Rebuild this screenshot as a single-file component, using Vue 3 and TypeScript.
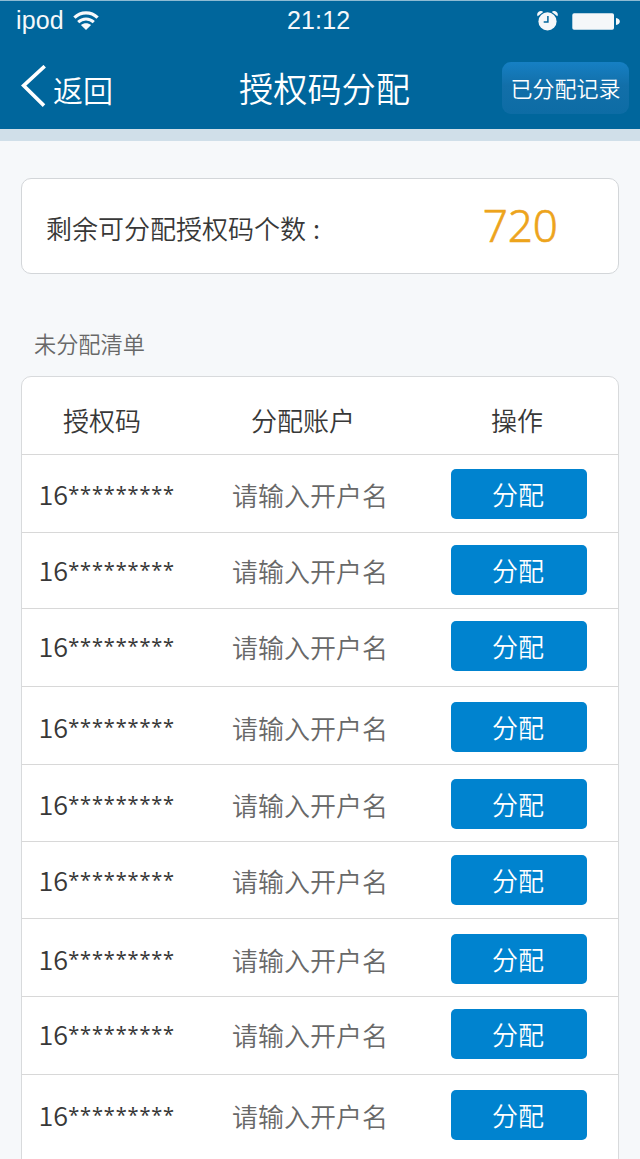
<script setup lang="ts">
interface Row {
  prefix: string
  mask: string
  height: number
  top: number
}

const prefix = '16'
const mask = '*********'
const rows: Row[] = [
  { prefix, mask, height: 78, top: 14 },
  { prefix, mask, height: 76, top: 12 },
  { prefix, mask, height: 78, top: 12 },
  { prefix, mask, height: 78, top: 15 },
  { prefix, mask, height: 77, top: 14 },
  { prefix, mask, height: 77, top: 13 },
  { prefix, mask, height: 78, top: 15 },
  { prefix, mask, height: 78, top: 12 },
  { prefix, mask, height: 108, top: 15 },
]
</script>

<template>
  <div class="screen">
    <header class="header">
      <div class="status">
        <span class="carrier">ipod</span>
        <svg class="wifi" width="26" height="19" viewBox="0 0 26 19" fill="none" stroke="#f7f9fb">
          <path d="M1.4 6.6C8 .2 18 .2 24.6 6.6" stroke-width="3.3" />
          <path d="M5.2 11.1C9.7 6.8 16.3 6.8 20.8 11.1" stroke-width="3" />
          <path d="M7.9 14.1C11 11.5 15 11.5 18.1 14.1L13 19Z" fill="#f7f9fb" stroke="none" />
        </svg>
        <span class="time">21:12</span>
        <svg class="alarm" width="21" height="20" viewBox="0 0 21 20">
          <path d="M.7 5.3A3.5 3.5 0 0 1 6.2 1.1ZM20.3 5.3A3.5 3.5 0 0 0 14.8 1.1Z" fill="#f5f7f9" />
          <circle cx="10.5" cy="10.4" r="9.1" fill="#f5f7f9" />
          <path d="M10.9 5v5.9H6.7" fill="none" stroke="#00669c" stroke-width="1.5" />
        </svg>
        <svg class="battery" width="49" height="17" viewBox="0 0 49 17" fill="#f5f7f9">
          <rect x=".3" y=".3" width="41.7" height="16.4" rx="1.8" />
          <path d="M44 5Q47.8 5.7 47.8 8.5T44 12Z" />
        </svg>
      </div>
      <nav class="nav">
        <a class="back">
          <svg width="25" height="42" viewBox="0 0 25 42" fill="none" stroke="#fff" stroke-width="3.6">
            <path d="M23.7 1.2L2.6 20.6L23 40.6" />
          </svg>
          <span>返回</span>
        </a>
        <h1 class="title">授权码分配</h1>
        <button class="history">已分配记录</button>
      </nav>
    </header>

    <section class="summary">
      <span class="label">剩余可分配授权码个数<span class="colon">:</span></span>
      <span class="count">720</span>
    </section>

    <h2 class="caption">未分配清单</h2>

    <section class="list">
      <div class="list-head">
        <span>授权码</span>
        <span>分配账户</span>
        <span>操作</span>
      </div>
      <div v-for="(row, i) in rows" :key="i" class="row" :style="{ height: row.height + 'px', paddingTop: row.top + 'px' }">
        <span class="code">{{ row.prefix }}<span class="mask">{{ row.mask }}</span></span>
        <span class="account">请输入开户名</span>
        <button class="assign">分配</button>
      </div>
    </section>
  </div>
</template>

<style>
body {
  background: #f6f8fa;
}
</style>

<style scoped>
.screen {
  box-sizing: border-box;
  width: 640px;
  height: 1159px;
  overflow: hidden;
  background: #f6f8fa;
  font-family: "Noto Sans CJK SC", sans-serif;
  font-weight: 350;
  color: #383838;
}
button {
  padding: 0;
  border: 0;
  font-family: inherit;
  font-weight: inherit;
  color: #fff;
}
.header {
  box-sizing: border-box;
  height: 141px;
  border-top: 1px solid #8dbbd3;
  border-bottom: 12px solid #d0dfe9;
  background: #00669c;
  color: #fff;
}
.status {
  display: flex;
  height: 40px;
  padding-left: 16px;
  font: 25px/39px "Liberation Sans", Arial, sans-serif;
  letter-spacing: 0.15px;
  color: #f5f8fa;
}
.carrier {
  width: 57px;
}
.wifi {
  margin-top: 10px;
}
.time {
  width: 250px;
  margin-left: 188px;
}
.alarm {
  flex: none;
  margin: 10px 14px 0 0;
}
.battery {
  flex: none;
  margin-top: 12px;
}
.nav {
  display: grid;
  grid-template-columns: 218px 263px 127px;
  padding: 20px 0 0 21px;
}
.back {
  display: flex;
  gap: 7px;
  height: 56px;
  font-size: 30px;
  line-height: 57px;
}
.back svg {
  margin-top: 4px;
}
.title {
  margin: 0;
  font-size: 34.2px;
  font-weight: inherit;
  line-height: 52px;
}
.history {
  width: 127px;
  height: 52px;
  margin-top: 1px;
  padding-bottom: 2px;
  border-radius: 9px;
  background: linear-gradient(#1680c4, #126fa9 45%, #0d6ca5);
  font-size: 22px;
  line-height: 50px;
  white-space: nowrap;
}
.summary {
  box-sizing: border-box;
  display: flex;
  justify-content: space-between;
  width: 598px;
  height: 96px;
  margin: 37px 0 0 21px;
  padding: 0 60px 0 24px;
  border: 1px solid #d3d6d9;
  border-radius: 10px;
  background: #fff;
}
.label {
  font-size: 26px;
  line-height: 98px;
}
.colon {
  margin-left: 7px;
}
.count {
  font: 350 44px/93px "Noto Sans", sans-serif;
  color: #eda41c;
  -webkit-text-stroke: 0.6px #eda41c;
}
.caption {
  margin: 54px 0 0 34px;
  font-size: 22.2px;
  font-weight: inherit;
  line-height: 30px;
  color: #686868;
}
.list {
  box-sizing: border-box;
  width: 598px;
  margin: 18px 0 0 21px;
  border: 1px solid #d8dadc;
  border-radius: 10px;
  background: #fff;
}
.list-head,
.row {
  box-sizing: border-box;
  display: grid;
  align-content: start;
  border-bottom: 1px solid #d8d8d8;
  font-size: 26px;
}
.list-head {
  grid-template-columns: 188px 240px 1fr;
  height: 78px;
  padding-left: 41px;
  line-height: 86px;
}
.row {
  grid-template-columns: 193.4px 219px 136px;
  padding-left: 16.5px;
  line-height: 52px;
}
.code {
  height: 50px;
  font-size: 27px;
  line-height: 50px;
}
.mask {
  font-family: "Noto Sans", sans-serif;
  font-size: 20px;
  font-weight: 400;
  line-height: 20px;
  letter-spacing: 0.85px;
  vertical-align: 4px;
}
.account {
  height: 50px;
  color: #686868;
}
.assign {
  height: 50px;
  padding-right: 2px;
  border-radius: 5px;
  background: #0083cf;
  font-size: 26px;
  line-height: 50px;
}
</style>
